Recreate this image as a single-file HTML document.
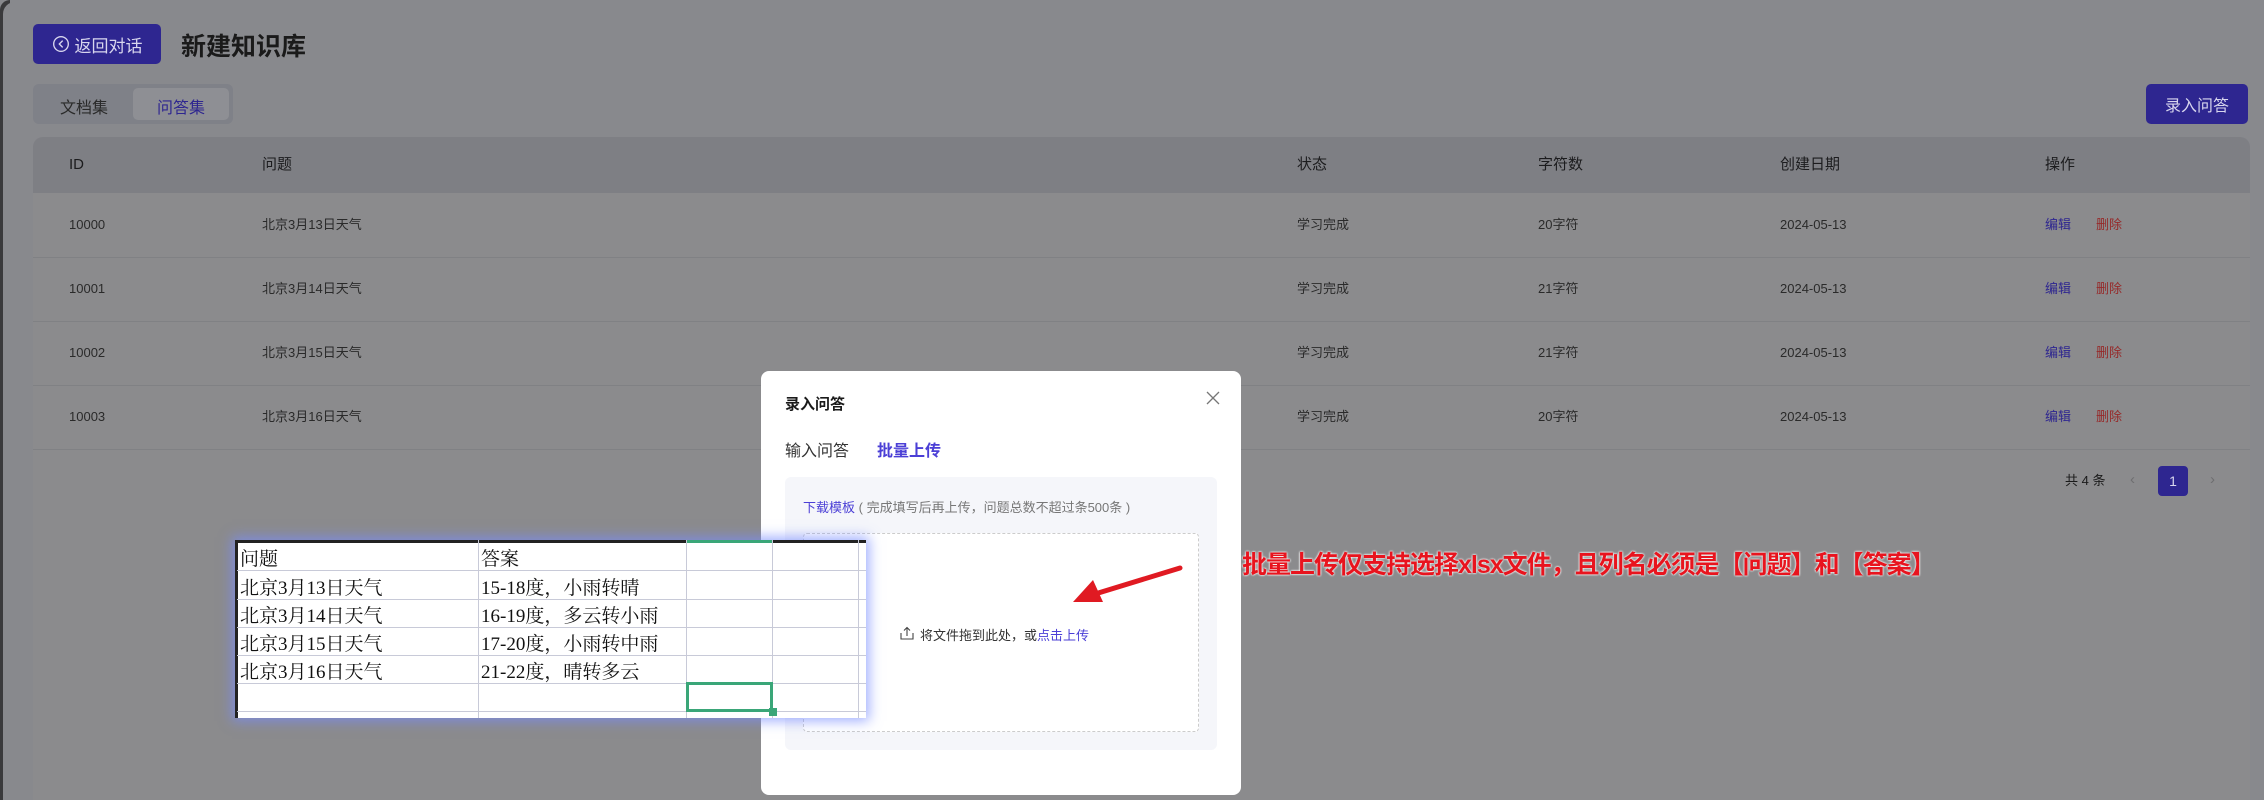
<!DOCTYPE html>
<html><head><meta charset="utf-8"><style>
*{margin:0;padding:0;box-sizing:border-box}
body{width:2264px;height:800px;overflow:hidden;background:#88898d;font-family:"Liberation Sans","Noto Sans CJK SC",sans-serif;position:relative;color:#222}
.a{position:absolute;white-space:nowrap}
.btn{background:#2e2690;color:#d8d6ee;border-radius:5px;font-size:16px;display:flex;align-items:center;justify-content:center}
.th{font-size:15px;color:#1c1c1e;top:155px;line-height:20px}
.td{font-size:13px;color:#2a2a2a;line-height:20px}
.sep{position:absolute;left:33px;width:2217px;height:1px;background:#808184}
.sh{position:absolute;font-family:"Liberation Serif","Noto Serif CJK SC",serif;font-size:19px;color:#111}
</style></head><body>
<div class="a" style="left:0;top:0;width:10px;height:800px;background:#3a3a3c;border-radius:12px 0 0 0"></div>
<div class="a" style="left:3px;top:2px;width:2261px;height:798px;background:#88898d;border-radius:12px 0 0 0"></div>

<div class="a btn" style="left:33px;top:24px;width:128px;height:40px;font-size:17px"><svg width="18" height="18" viewBox="0 0 16 16" style="margin-right:5px"><circle cx="8" cy="8" r="6.5" fill="none" stroke="#d8d6ee" stroke-width="1.2"/><path d="M9.5 5 L6.5 8 L9.5 11" fill="none" stroke="#d8d6ee" stroke-width="1.2"/></svg>返回对话</div>
<div class="a" style="left:181px;top:27px;font-size:25px;font-weight:bold;color:#1a1a1a">新建知识库</div>

<div class="a" style="left:33px;top:84px;width:200px;height:40px;background:#7f8188;border-radius:6px"></div>
<div class="a" style="left:133px;top:88px;width:96px;height:32px;background:#8e8f94;border-radius:5px"></div>
<div class="a" style="left:60px;top:94px;font-size:16px;color:#2a2a2a">文档集</div>
<div class="a" style="left:157px;top:94px;font-size:16px;color:#2e2690">问答集</div>

<div class="a btn" style="left:2146px;top:84px;width:102px;height:40px;font-size:16px">录入问答</div>

<div class="a" style="left:33px;top:137px;width:2217px;height:663px;background:#8b8b8d;border-radius:10px 10px 0 0"></div>
<div class="a" style="left:33px;top:137px;width:2217px;height:56px;background:#7e7f84;border-radius:10px 10px 0 0"></div>
<div class="a th" style="left:69px">ID</div>
<div class="a th" style="left:262px">问题</div>
<div class="a th" style="left:1297px">状态</div>
<div class="a th" style="left:1538px">字符数</div>
<div class="a th" style="left:1780px">创建日期</div>
<div class="a th" style="left:2045px">操作</div>

<div class="sep" style="top:257px"></div><div class="sep" style="top:321px"></div><div class="sep" style="top:385px"></div><div class="sep" style="top:449px"></div>

<div class="a td" style="left:69px;top:215px">10000</div><div class="a td" style="left:262px;top:215px">北京3月13日天气</div><div class="a td" style="left:1297px;top:215px">学习完成</div><div class="a td" style="left:1538px;top:215px">20字符</div><div class="a td" style="left:1780px;top:215px">2024-05-13</div><div class="a td" style="left:2045px;top:215px;color:#2e2690">编辑</div><div class="a td" style="left:2096px;top:215px;color:#962a2a">删除</div>
<div class="a td" style="left:69px;top:279px">10001</div><div class="a td" style="left:262px;top:279px">北京3月14日天气</div><div class="a td" style="left:1297px;top:279px">学习完成</div><div class="a td" style="left:1538px;top:279px">21字符</div><div class="a td" style="left:1780px;top:279px">2024-05-13</div><div class="a td" style="left:2045px;top:279px;color:#2e2690">编辑</div><div class="a td" style="left:2096px;top:279px;color:#962a2a">删除</div>
<div class="a td" style="left:69px;top:343px">10002</div><div class="a td" style="left:262px;top:343px">北京3月15日天气</div><div class="a td" style="left:1297px;top:343px">学习完成</div><div class="a td" style="left:1538px;top:343px">21字符</div><div class="a td" style="left:1780px;top:343px">2024-05-13</div><div class="a td" style="left:2045px;top:343px;color:#2e2690">编辑</div><div class="a td" style="left:2096px;top:343px;color:#962a2a">删除</div>
<div class="a td" style="left:69px;top:407px">10003</div><div class="a td" style="left:262px;top:407px">北京3月16日天气</div><div class="a td" style="left:1297px;top:407px">学习完成</div><div class="a td" style="left:1538px;top:407px">20字符</div><div class="a td" style="left:1780px;top:407px">2024-05-13</div><div class="a td" style="left:2045px;top:407px;color:#2e2690">编辑</div><div class="a td" style="left:2096px;top:407px;color:#962a2a">删除</div>

<div class="a td" style="left:2065px;top:471px;color:#1a1a1a">共 4 条</div>
<div class="a td" style="left:2130px;top:470px;color:#6e6e70;font-size:15px">‹</div>
<div class="a btn" style="left:2158px;top:466px;width:30px;height:30px;font-size:14px;border-radius:4px">1</div>
<div class="a td" style="left:2210px;top:470px;color:#6e6e70;font-size:15px">›</div>

<div class="a" style="left:1242px;top:545px;font-size:25px;font-weight:bold;color:#e8141e;letter-spacing:-1px;text-shadow:0 0 2px #fff,0 0 2px #fff">批量上传仅支持选择xlsx文件，且列名必须是【问题】和【答案】</div>

<!-- modal -->
<div class="a" style="left:761px;top:371px;width:480px;height:424px;background:#fff;border-radius:8px"></div>
<div class="a" style="left:785px;top:393px;font-size:15px;font-weight:bold;color:#1a1a1a">录入问答</div>
<svg class="a" style="left:1205px;top:390px" width="16" height="16" viewBox="0 0 16 16"><path d="M2 2L14 14M14 2L2 14" stroke="#777" stroke-width="1.3"/></svg>
<div class="a" style="left:785px;top:437px;font-size:16px;color:#333">输入问答</div>
<div class="a" style="left:877px;top:437px;font-size:16px;color:#4b3fd6;font-weight:bold">批量上传</div>
<div class="a" style="left:785px;top:477px;width:432px;height:273px;background:#f5f6fa;border-radius:6px"></div>
<div class="a" style="left:803px;top:497px;font-size:13px;color:#4b3fd6">下载模板<span style="color:#777"> ( 完成填写后再上传，问题总数不超过条500条 )</span></div>
<div class="a" style="left:803px;top:533px;width:396px;height:199px;background:#fff;border:1px dashed #ccc;border-radius:4px"></div>
<svg class="a" style="left:900px;top:626px" width="14" height="14" viewBox="0 0 14 14"><path d="M1 7v6h12V7M7 10V1.5M4 4.5L7 1.5L10 4.5" fill="none" stroke="#444" stroke-width="1.1"/></svg>
<div class="a" style="left:920px;top:625px;font-size:13px;color:#333">将文件拖到此处，或<span style="color:#4b3fd6">点击上传</span></div>
<svg class="a" style="left:1060px;top:560px" width="130" height="50" viewBox="0 0 130 50"><path d="M120 8 L35 34" stroke="#e01a22" stroke-width="5" stroke-linecap="round"/><path d="M13 42 L33 20 L43 42 Z" fill="#e01a22"/></svg>

<!-- spreadsheet -->
<div class="a" style="left:235px;top:540px;width:631px;height:178px;background:#fff;box-shadow:0 0 12px 3px rgba(120,140,255,.7);border-top:3px solid #222;border-left:3px solid #222"></div>
<div class="a" style="left:686px;top:540px;width:86px;height:3px;background:#3aa678"></div>
<div class="a" style="left:478px;top:540px;width:1px;height:178px;background:#c8cad8"></div>
<div class="a" style="left:686px;top:540px;width:1px;height:178px;background:#c8cad8"></div>
<div class="a" style="left:772px;top:540px;width:1px;height:178px;background:#c8cad8"></div>
<div class="a" style="left:858px;top:540px;width:1px;height:178px;background:#c8cad8"></div>
<div class="a" style="left:237px;top:570px;width:629px;height:1px;background:#c8cad8"></div>
<div class="a" style="left:237px;top:599px;width:629px;height:1px;background:#c8cad8"></div>
<div class="a" style="left:237px;top:627px;width:629px;height:1px;background:#c8cad8"></div>
<div class="a" style="left:237px;top:655px;width:629px;height:1px;background:#c8cad8"></div>
<div class="a" style="left:237px;top:683px;width:629px;height:1px;background:#c8cad8"></div>
<div class="a" style="left:237px;top:711px;width:629px;height:1px;background:#c8cad8"></div>
<div class="a" style="left:686px;top:682px;width:87px;height:30px;border:3px solid #3aa678"></div>
<div class="a" style="left:769px;top:708px;width:8px;height:8px;background:#3aa678"></div>
<div class="sh" style="left:240px;top:544px">问题</div><div class="sh" style="left:481px;top:544px">答案</div>
<div class="sh" style="left:240px;top:573px">北京3月13日天气</div><div class="sh" style="left:481px;top:573px">15-18度，小雨转晴</div>
<div class="sh" style="left:240px;top:601px">北京3月14日天气</div><div class="sh" style="left:481px;top:601px">16-19度，多云转小雨</div>
<div class="sh" style="left:240px;top:629px">北京3月15日天气</div><div class="sh" style="left:481px;top:629px">17-20度，小雨转中雨</div>
<div class="sh" style="left:240px;top:657px">北京3月16日天气</div><div class="sh" style="left:481px;top:657px">21-22度，晴转多云</div>
</body></html>
